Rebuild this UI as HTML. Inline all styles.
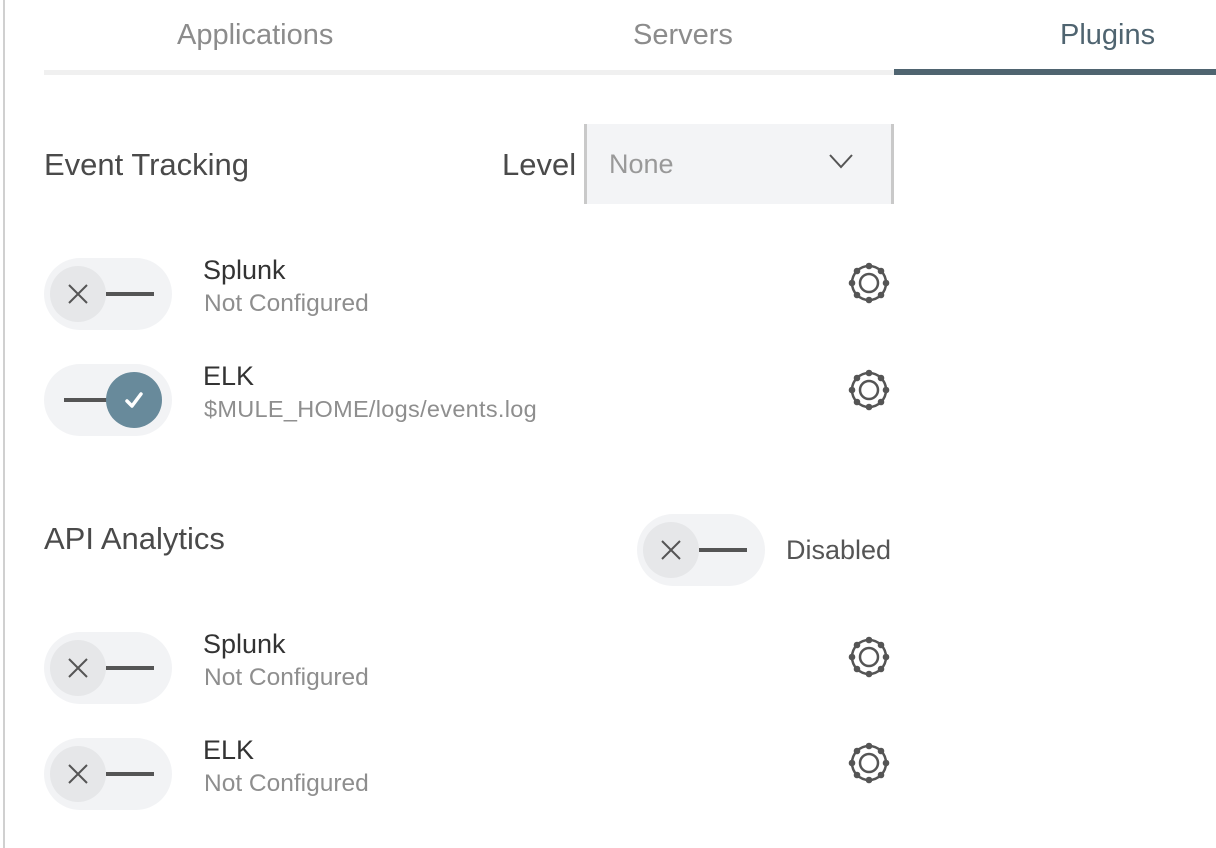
<!DOCTYPE html>
<html><head><meta charset="utf-8"><style>
*{margin:0;padding:0;box-sizing:border-box}
body{width:1216px;height:848px;background:#fff;position:relative;overflow:hidden;font-family:"Liberation Sans",sans-serif}
.a{position:absolute;white-space:nowrap}
.vl{left:3px;top:0;width:2px;height:848px;background:#d0d0d0}
.tab{top:19px;font-size:29px;color:#8c8c8c}
.h{font-size:31px;color:#4a4a4a}
.nm{font-size:27px;color:#333}
.sb{font-size:24.5px;color:#8e8e8e}
.pill{width:128px;height:72px;border-radius:36px;background:#f2f3f5}
.knob{position:absolute;top:8px;width:56px;height:56px;border-radius:50%;background:#e6e7e9}
.ln{position:absolute;top:34px;height:4px;background:#555}
</style></head><body>
<div class="a vl"></div>
<div class="a tab" style="left:177px">Applications</div>
<div class="a tab" style="left:633px">Servers</div>
<div class="a tab" style="left:1060px;color:#4f6470">Plugins</div>
<div class="a" style="left:44px;top:70px;width:850px;height:5px;background:#f0f0f0"></div>
<div class="a" style="left:894px;top:69px;width:322px;height:6px;background:#4f6470"></div>

<div class="a h" style="left:44px;top:147px">Event Tracking</div>
<div class="a h" style="left:502px;top:147px">Level</div>
<div class="a" style="left:584px;top:124px;width:310px;height:80px;background:#f3f4f6;border-left:3px solid #c9c9c9;border-right:3px solid #c9c9c9"></div>
<div class="a" style="left:609px;top:149px;font-size:27px;color:#999">None</div>
<svg class="a" style="left:828px;top:152px" width="26" height="18"><path d="M2 3 L13 15 L24 3" fill="none" stroke="#555" stroke-width="2"/></svg>

<div class="a pill" style="left:44px;top:258px"><div class="knob" style="left:6px"></div><div class="ln" style="left:62px;width:48px"></div>
<svg class="a" style="left:24px;top:26px" width="20" height="20"><path d="M1 1L19 19M19 1L1 19" stroke="#555" stroke-width="2"/></svg></div>
<div class="a nm" style="left:203px;top:255px">Splunk</div>
<div class="a sb" style="left:204px;top:290px">Not Configured</div>

<div class="a pill" style="left:44px;top:364px"><div class="ln" style="left:20px;width:50px"></div><div class="knob" style="left:62px;background:#688a9b"></div>
<svg class="a" style="left:80px;top:26px" width="20" height="20"><path d="M3 11L8 16L17 4" fill="none" stroke="#fff" stroke-width="3.5" stroke-linecap="round" stroke-linejoin="round"/></svg></div>
<div class="a nm" style="left:203px;top:361px">ELK</div>
<div class="a sb" style="left:204px;top:396px;font-size:23.5px;letter-spacing:0.3px">$MULE_HOME/logs/events.log</div>

<div class="a h" style="left:44px;top:521px">API Analytics</div>
<div class="a pill" style="left:637px;top:514px"><div class="knob" style="left:6px"></div><div class="ln" style="left:62px;width:48px"></div>
<svg class="a" style="left:24px;top:26px" width="20" height="20"><path d="M1 1L19 19M19 1L1 19" stroke="#555" stroke-width="2"/></svg></div>
<div class="a" style="left:786px;top:535px;font-size:27px;color:#555">Disabled</div>

<div class="a pill" style="left:44px;top:632px"><div class="knob" style="left:6px"></div><div class="ln" style="left:62px;width:48px"></div>
<svg class="a" style="left:24px;top:26px" width="20" height="20"><path d="M1 1L19 19M19 1L1 19" stroke="#555" stroke-width="2"/></svg></div>
<div class="a nm" style="left:203px;top:629px">Splunk</div>
<div class="a sb" style="left:204px;top:664px">Not Configured</div>

<div class="a pill" style="left:44px;top:738px"><div class="knob" style="left:6px"></div><div class="ln" style="left:62px;width:48px"></div>
<svg class="a" style="left:24px;top:26px" width="20" height="20"><path d="M1 1L19 19M19 1L1 19" stroke="#555" stroke-width="2"/></svg></div>
<div class="a nm" style="left:203px;top:735px">ELK</div>
<div class="a sb" style="left:204px;top:770px">Not Configured</div>

<svg width="0" height="0" style="position:absolute"><defs><g id="g">
<circle cx="22" cy="22" r="17" fill="none" stroke="#555" stroke-width="2.5"/>
<circle cx="22" cy="22" r="9" fill="none" stroke="#555" stroke-width="2.5"/>
<g fill="#555"><circle cx="22" cy="5" r="3.3"/><circle cx="22" cy="39" r="3.3"/><circle cx="5" cy="22" r="3.3"/><circle cx="39" cy="22" r="3.3"/>
<circle cx="10" cy="10" r="3.3"/><circle cx="34" cy="10" r="3.3"/><circle cx="10" cy="34" r="3.3"/><circle cx="34" cy="34" r="3.3"/></g></g></defs></svg>
<svg class="a" style="left:847px;top:261px" width="44" height="44"><use href="#g"/></svg>
<svg class="a" style="left:847px;top:368px" width="44" height="44"><use href="#g"/></svg>
<svg class="a" style="left:847px;top:635px" width="44" height="44"><use href="#g"/></svg>
<svg class="a" style="left:847px;top:741px" width="44" height="44"><use href="#g"/></svg>
</body></html>
